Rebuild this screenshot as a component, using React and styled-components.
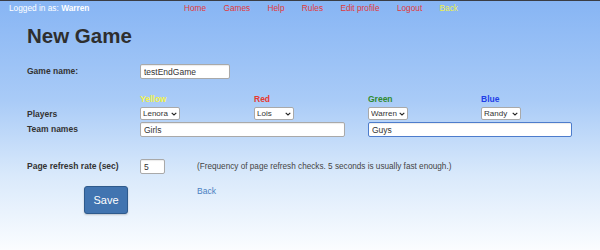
import styled, { createGlobalStyle } from 'styled-components'

const GlobalStyle = createGlobalStyle`
  html, body {
    margin: 0;
    padding: 0;
  }
  body {
    font-family: "Liberation Sans", Arial, sans-serif;
    color: #333;
  }
`

const players = [
  { color: 'Yellow', hue: '#f2f24a', name: 'Lenora' },
  { color: 'Red', hue: '#e8392e', name: 'Lois' },
  { color: 'Green', hue: '#2f8a2f', name: 'Warren' },
  { color: 'Blue', hue: '#1f3ee8', name: 'Randy' },
]

const Chevron = () => (
  <svg width="6" height="4" viewBox="0 0 6 4">
    <path d="M0.7 0.8 L3 3 L5.3 0.8" fill="none" stroke="#222" strokeWidth="1.1" />
  </svg>
)

const PlayerSelect = ({ name }) => (
  <SelectWrap>
    <Select defaultValue={name}>
      <option>{name}</option>
    </Select>
    <ChevronSpot>
      <Chevron />
    </ChevronSpot>
  </SelectWrap>
)

const App = () => {
  return (
    <Page>
      <GlobalStyle />
      <TopBar>
        <Who>
          Logged in as: <b>Warren</b>
        </Who>
        <Nav>
          <NavLink>Home</NavLink>
          <NavLink>Games</NavLink>
          <NavLink>Help</NavLink>
          <NavLink>Rules</NavLink>
          <NavLink>Edit profile</NavLink>
          <NavLink>Logout</NavLink>
          <NavLink $back>Back</NavLink>
        </Nav>
      </TopBar>
      <Content>
        <Title>New Game</Title>
        <Form>
          <Label>Game name:</Label>
          <Field $span={4}>
            <TextInput $w={90} defaultValue="testEndGame" />
          </Field>

          <Spacer />
          {players.map((p) => (
            <ColorName key={p.color} $hue={p.hue}>{p.color}</ColorName>
          ))}

          <Label>Players</Label>
          {players.map((p) => (
            <Field key={p.name}>
              <PlayerSelect name={p.name} />
            </Field>
          ))}

          <Label>Team names</Label>
          <Field $span={2}>
            <TextInput $w={205} defaultValue="Girls" />
          </Field>
          <Field $span={2}>
            <TextInput $w={204} $focus defaultValue="Guys" />
          </Field>

          <Label $gap>Page refresh rate (sec)</Label>
          <RefreshField>
            <TextInput $w={25} defaultValue="5" />
            <Hint>(Frequency of page refresh checks. 5 seconds is usually fast enough.)</Hint>
          </RefreshField>

          <ButtonCell>
            <SaveButton>Save</SaveButton>
          </ButtonCell>
          <BackLink>Back</BackLink>
        </Form>
      </Content>
    </Page>
  )
}

export default App

const Page = styled.div`
  min-height: 250px;
  height: 100vh;
  box-sizing: border-box;
  border-top: 1px solid #3a3d44;
  background: linear-gradient(#87b5f4 0%, #a9cbf7 40%, #d9e9fb 70%, #fbfdff 100%);
`
const TopBar = styled.div`
  display: flex;
  align-items: center;
  height: 14px;
  padding-left: 9px;
  font-size: 8.3px;
`
const Who = styled.div`
  color: #fff;
  width: 175px;
  b {
    font-weight: 700;
  }
`
const Nav = styled.nav`
  display: flex;
  gap: 17.3px;
`
const NavLink = styled.a`
  color: ${(p) => (p.$back ? '#eef04c' : '#e0383a')};
  cursor: pointer;
`
const Content = styled.div`
  padding-left: 27px;
`
const Title = styled.h1`
  margin: 8px 0 0;
  font-size: 20.5px;
  font-weight: 700;
  line-height: 26px;
  color: #2e2e2e;
`
const Form = styled.div`
  display: grid;
  grid-template-columns: 113px 114px 114px 113px 114px;
  align-items: start;
  margin-top: 15px;
`
const Label = styled.div`
  font-size: 8.5px;
  font-weight: 700;
  color: #333;
  line-height: 10px;
  padding-top: 2px;
  margin-top: ${(p) => (p.$gap ? '20px' : '0')};
`
const Field = styled.div`
  grid-column: span ${(p) => p.$span || 1};
  margin-bottom: 2px;
`
const RefreshField = styled.div`
  grid-column: span 4;
  display: flex;
  align-items: center;
  margin-top: 20px;
`
const Spacer = styled.div``
const ColorName = styled.div`
  color: ${(p) => p.$hue};
  font-size: 8.5px;
  font-weight: 700;
  line-height: 10px;
  margin-top: 13px;
  margin-bottom: 3px;
`
const TextInput = styled.input`
  display: block;
  box-sizing: border-box;
  width: ${(p) => p.$w}px;
  height: 15px;
  padding: 0 3px;
  font-family: "Liberation Sans", Arial, sans-serif;
  font-size: 8.5px;
  color: #333;
  background: #fff;
  border: ${(p) => (p.$focus ? '1.5px solid #4d7ccc' : '1px solid #a9a9a9')};
  border-radius: 2px;
  box-shadow: inset 0 1px 1px rgba(0, 0, 0, 0.08);
  outline: none;
`
const SelectWrap = styled.div`
  position: relative;
  width: 40px;
  height: 13px;
`
const Select = styled.select`
  display: block;
  appearance: none;
  box-sizing: border-box;
  width: 40px;
  height: 13px;
  padding: 0 0 0 2px;
  font-family: "Liberation Sans", Arial, sans-serif;
  font-size: 8px;
  color: #333;
  background: #fff;
  border: 1px solid #a9a9a9;
  border-radius: 2px;
  outline: none;
`
const ChevronSpot = styled.span`
  position: absolute;
  right: 3px;
  top: 4.5px;
  display: flex;
  pointer-events: none;
`
const Hint = styled.div`
  margin-left: 32px;
  font-size: 8.2px;
  color: #444;
`
const ButtonCell = styled.div`
  padding-left: 57px;
  padding-top: 12px;
`
const SaveButton = styled.button`
  box-sizing: border-box;
  width: 44px;
  height: 28px;
  font-family: "Liberation Sans", Arial, sans-serif;
  font-size: 11px;
  color: #fff;
  background: #4174b0;
  border: 1px solid #2e5a8c;
  border-radius: 3px;
  box-shadow: 0 1px 2px rgba(0, 0, 0, 0.2);
`
const BackLink = styled.a`
  grid-column: span 4;
  padding-left: 57px;
  padding-top: 12px;
  font-size: 8.5px;
  color: #4a7fc0;
  cursor: pointer;
`
